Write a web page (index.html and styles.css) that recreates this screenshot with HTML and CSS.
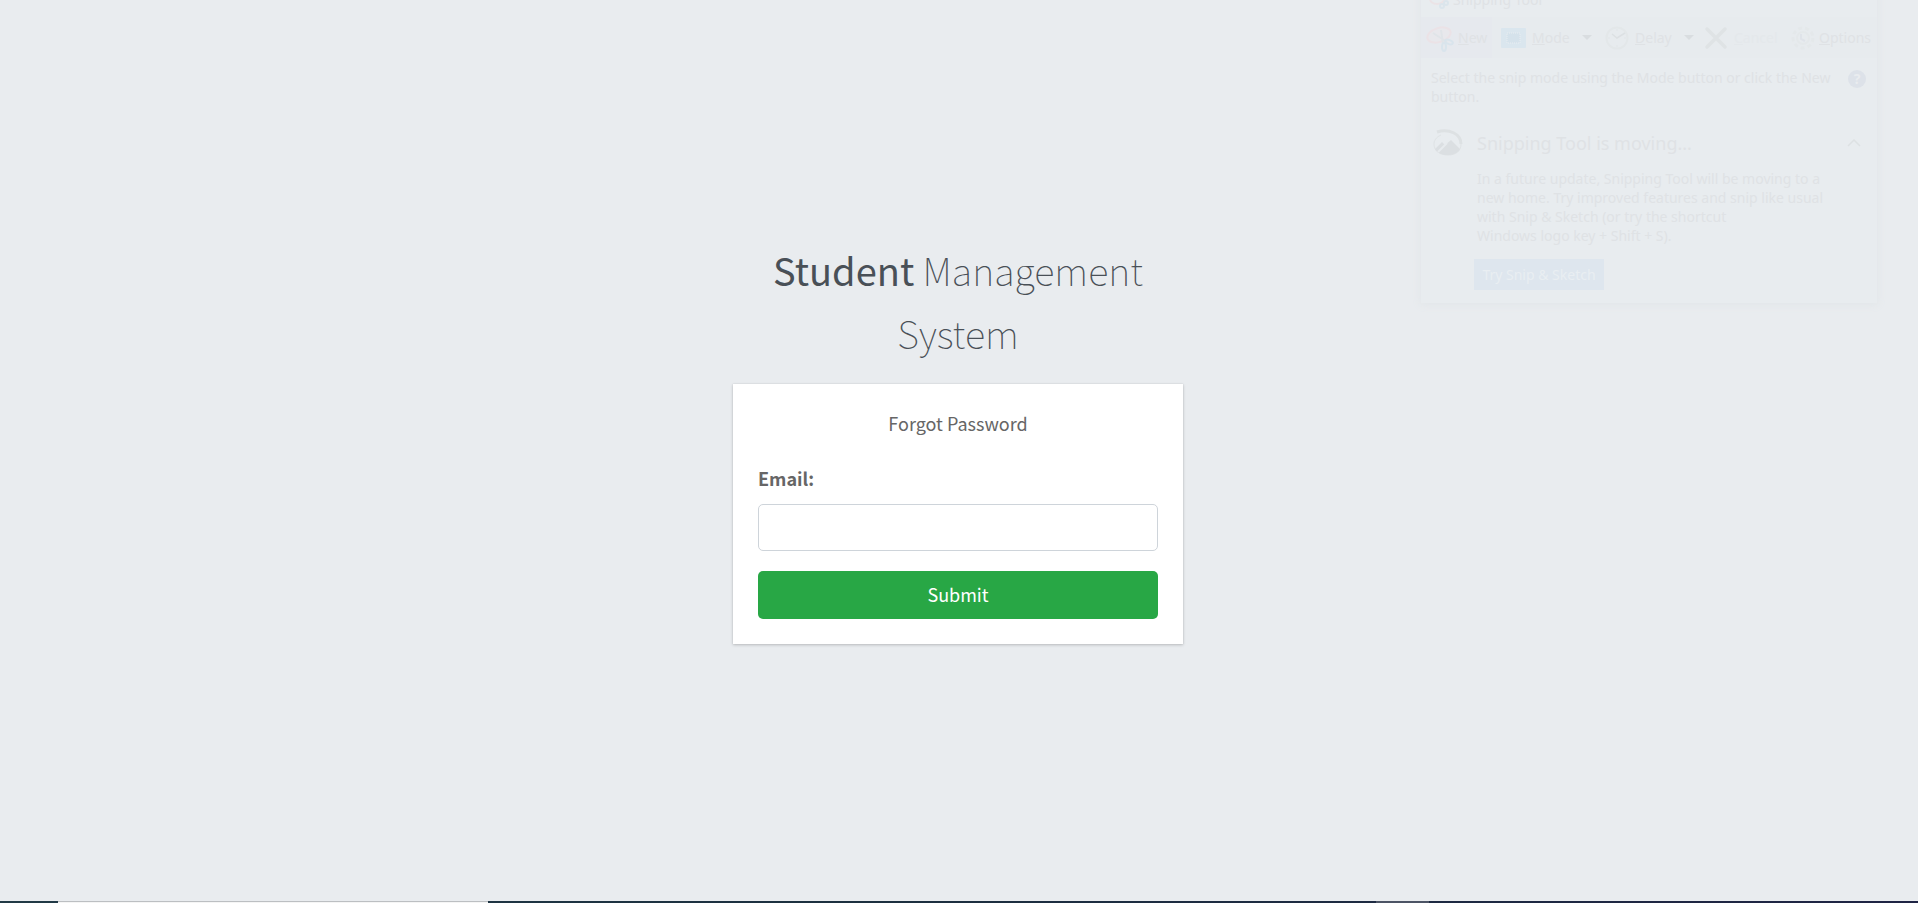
FILE: index.html
```html
<!DOCTYPE html>
<html lang="en">
<head>
<meta charset="utf-8">
<meta name="viewport" content="width=device-width, initial-scale=1">
<title>Student Management System</title>
<link rel="stylesheet" href="styles.css">
</head>
<body>
<main class="page">
  <div class="login-box">
    <h1 class="logo"><b>Student</b> Management System</h1>
    <section class="card">
      <p class="message">Forgot Password</p>
      <form class="form">
        <label class="label" for="email">Email:</label>
        <input class="field" type="email" id="email" name="email">
        <button class="submit" type="submit">Submit</button>
      </form>
    </section>
  </div>
</main>

<aside class="snip">
  <div class="snip-title">
    <svg width="20" height="20" viewBox="0 0 20 20" fill="none" stroke-width="2"><ellipse cx="8" cy="9" rx="7" ry="5" stroke="#ebe3e6"/><circle cx="13" cy="16" r="2" stroke="#dbe5ec"/><circle cx="17" cy="13" r="2" stroke="#dbe5ec"/></svg>
    <span>Snipping Tool</span>
  </div>
  <div class="snip-bar">
    <button class="tool tool-new" type="button">
      <svg width="28" height="28" viewBox="0 0 28 28" fill="none" stroke-width="2"><ellipse cx="13" cy="11" rx="12" ry="7" transform="rotate(-18 13 11)" fill="#e8e8ec" stroke="#ebe2e6"/><path d="M7 9l14 9M15 6l2 14" stroke="#e0e4e8"/><ellipse cx="18" cy="23" rx="2" ry="4" stroke="#d9e4ec"/><ellipse cx="23" cy="18" rx="4" ry="2" transform="rotate(20 23 18)" stroke="#d9e4ec"/></svg>
      <span><u>N</u>ew</span>
    </button>
    <button class="tool tool-mode" type="button">
      <svg width="25" height="20" viewBox="0 0 25 20"><rect width="25" height="20" rx="1" fill="#dae6ee"/><rect x="6" y="5" width="13" height="10" fill="#d5e2eb" stroke="#e8edf1" stroke-dasharray="1 1"/></svg>
      <span><u>M</u>ode</span>
      <svg class="caret" width="10" height="5" viewBox="0 0 10 5"><path d="M0 0h10L5 5z" fill="#d9dde0"/></svg>
    </button>
    <button class="tool tool-delay" type="button">
      <svg width="24" height="24" viewBox="0 0 24 24" fill="none"><circle cx="12" cy="12" r="10.500" stroke="#e3e7e9" stroke-width="2"/><path d="M7 8l5 4 8-5" stroke="#dce0e3" stroke-width="1.500"/><path d="M12 3v2M12 19v2M3 12h2M19 12h2" stroke="#e1e5e8"/></svg>
      <span><u>D</u>elay</span>
      <svg class="caret" width="10" height="5" viewBox="0 0 10 5"><path d="M0 0h10L5 5z" fill="#d9dde0"/></svg>
    </button>
    <button class="tool tool-cancel" type="button">
      <svg width="24" height="24" viewBox="0 0 24 24"><path d="M3 3l18 18M21 3L3 21" stroke="#dfe3e5" stroke-width="3.500" stroke-linecap="round"/></svg>
      <span><u>C</u>ancel</span>
    </button>
    <button class="tool tool-options" type="button">
      <svg width="24" height="24" viewBox="0 0 24 24" fill="none"><circle cx="12" cy="12" r="10" stroke="#e4e8ea" stroke-width="3" stroke-dasharray="4 3"/><circle cx="12" cy="12" r="6" stroke="#e4e8ea" stroke-width="2"/><path d="M10 8v5l4 2" stroke="#dfe3e9" stroke-width="2"/></svg>
      <span><u>O</u>ptions</span>
    </button>
  </div>
  <div class="snip-hint">
    <p>Select the snip mode using the Mode button or click the New button.</p>
    <button class="help" type="button">?</button>
  </div>
  <div class="snip-notice">
    <svg width="30" height="28" viewBox="0 0 30 28" fill="none"><path d="M8 6C3 8 1 12 1 15c0 7 6 11 14 11s13-4 13-11" stroke="#dfe3e5"/><path d="M4 3C16-1 28 5 28 15" stroke="#dde1e3" stroke-width="3"/><path d="M2 20l7-7 3 3 6-5 9 9c-4 8-21 8-25 0z" fill="#dbdfe2"/><path d="M5 23l9-9" stroke="#e7ebee" stroke-width="2"/></svg>
    <h2 class="snip-heading">Snipping Tool is moving...</h2>
    <svg class="chevron" width="14" height="8" viewBox="0 0 14 8" fill="none"><path d="M1 7l6-6 6 6" stroke="#dde1e3" stroke-width="1.500"/></svg>
    <div class="snip-copy">
      <p>In a future update, Snipping Tool will be moving to a<br>new home. Try improved features and snip like usual<br>with Snip &amp; Sketch (or try the shortcut<br>Windows logo key + Shift + S).</p>
      <button class="try" type="button">Try Snip &amp; Sketch</button>
    </div>
  </div>
</aside>

<footer class="taskbar"><span class="task-window"></span><span class="task-active"></span></footer>
</body>
</html>
```
FILE: styles.css
```css
* { box-sizing: border-box; }

body {
  margin: 0;
  min-height: 100vh;
  display: flex;
  flex-direction: column;
  position: relative;
  overflow: hidden;
  background: #e9ecef;
  font-family: "Noto Sans CJK SC", "Noto Sans", sans-serif;
  font-size: 18px;
  line-height: 30px;
}

h1, h2, p { margin: 0; }
button { font: inherit; border: 0; margin: 0; }

.page {
  flex: 1;
  display: flex;
  flex-direction: column;
  align-items: center;
  justify-content: center;
  padding-right: 2px;
}

.login-box { width: 450px; margin-bottom: 19px; }

.logo {
  margin-bottom: 20px;
  padding: 0 20px;
  color: #495057;
  font-size: 38px;
  font-weight: 100;
  line-height: 63px;
  text-align: center;
}
.logo b { font-weight: 400; }

.card {
  padding: 24px 25px 25px;
  background: #fff;
  color: #666;
  box-shadow: 0 0 1px rgba(0, 0, 0, .13), 0 1px 3px rgba(0, 0, 0, .2);
}

.message { margin-bottom: 25px; text-align: center; }
.form { display: flex; flex-direction: column; }
.label { margin-bottom: 11px; font-weight: 700; }

.field {
  height: 47px;
  margin-bottom: 20px;
  padding: 8px 15px;
  border: 1px solid #ced4da;
  border-radius: 5px;
  background: #fff;
  color: #495057;
  font: inherit;
}

.submit {
  padding: 8px 15px 10px;
  border-radius: 5px;
  background: #28a745;
  color: #fff;
}

.snip {
  position: absolute;
  top: -12px;
  right: 41px;
  width: 456px;
  height: 315px;
  background: #e8ecef;
  box-shadow: 0 1px 8px 1px #e2e6e9;
  color: #dfe2e5;
  font-family: "Noto Sans", sans-serif;
  font-size: 14px;
  line-height: 19px;
}
.snip button { padding: 0; background: none; color: inherit; }

.snip-title { display: flex; align-items: center; gap: 4px; height: 29px; padding: 0 8px 6px; }

.snip-bar { display: flex; align-items: center; height: 41px; background: #e7ebee; }
.tool { display: flex; align-items: center; gap: 6px; height: 41px; }
.caret { margin-left: 6px; }
.snip .tool-new { width: 71px; padding-left: 5px; gap: 4px; background: #e6e9ee; }
.snip .tool-mode { width: 104px; padding-left: 9px; }
.snip .tool-delay { width: 108px; padding-left: 9px; }
.snip .tool-cancel { width: 87px; color: #e4e8eb; }
.snip .tool-options { gap: 4px; }

.snip-hint { display: flex; justify-content: space-between; padding: 10px 11px 0 10px; }
.snip-hint p { width: 402px; }
.snip .help {
  width: 18px;
  height: 18px;
  margin-top: 2px;
  border-radius: 50%;
  background: #dde2e9;
  color: #e9ecef;
  font-weight: 700;
  line-height: 18px;
}

.snip-notice {
  display: grid;
  grid-template-columns: 44px 1fr 14px;
  align-items: center;
  padding: 21px 16px 0 12px;
}
.snip-heading { font-size: 18px; font-weight: 400; line-height: 32px; }
.snip-copy { grid-column: 2 / 4; padding-top: 10px; }
.snip .try {
  height: 31px;
  width: 130px;
  margin: 14px 0 0 -3px;
  background: #dee6ee;
  color: #e9eef2;
}

.taskbar { display: flex; height: 2px; background: linear-gradient(90deg, #213a46, #1c3040 45%, #1f2444); }
.task-window { width: 430px; margin-left: 58px; background: #f5f5f5; border-top: 1px solid #bcbfc2; }
.task-active { width: 53px; margin: 0 489px 0 auto; background: #4c5465; }
```
